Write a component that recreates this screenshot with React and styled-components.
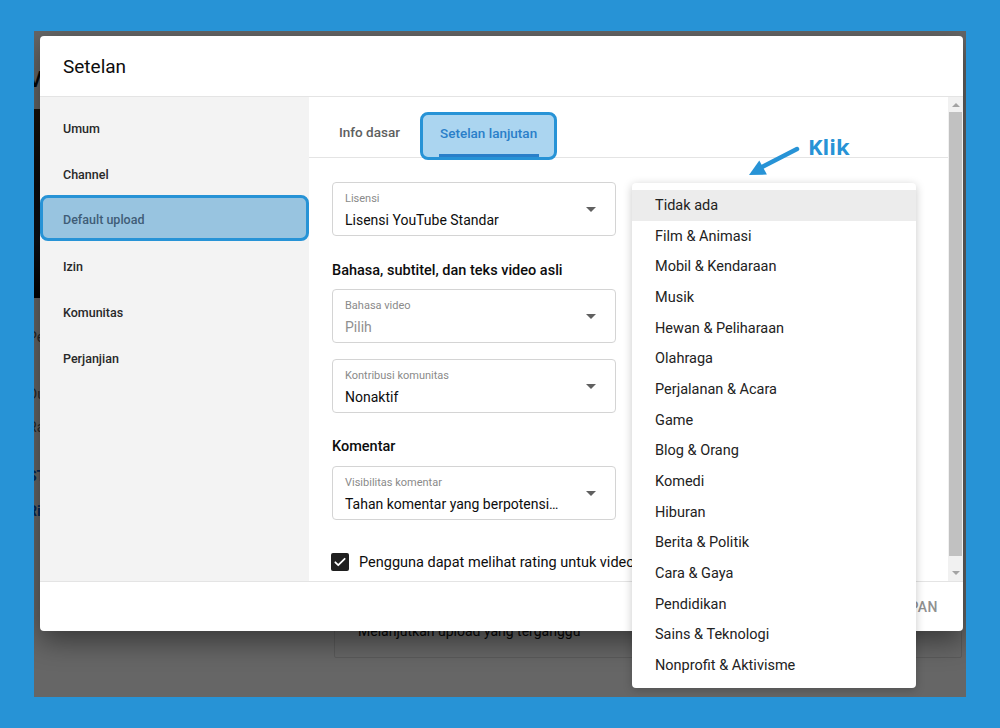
import React from "react";
import styled, { createGlobalStyle } from "styled-components";

const GlobalStyle = createGlobalStyle`
  html, body {
    margin: 0;
    padding: 0;
  }
  body {
    width: 1000px;
    height: 728px;
    overflow: hidden;
    background: #2793d6;
    font-family: Roboto, "Noto Sans", Arial, sans-serif;
  }
`;

const Frame = styled.div`
  position: relative;
  margin: 31px 0 0 34px;
  width: 932px;
  height: 666px;
  overflow: hidden;
  background: #ffffff;
`;

/* page that sits behind the dim overlay */
const BgPage = styled.div`
  display: grid;
  grid-template-columns: 300px 1fr;
  height: 100%;
`;

const BgLeft = styled.div`
  display: flex;
  flex-direction: column;
  margin-left: -6px;
  padding-top: 36px;
`;

const BgTitle = styled.div`
  font-size: 22px;
  font-weight: 500;
  color: #0f0f0f;
  height: 30px;
`;

const BgThumb = styled.div`
  margin-top: 12px;
  height: 189px;
  background: linear-gradient(180deg, #3a2a18 0%, #1b1b22 40%, #20283a 70%, #050505 100%);
`;

const BgLine = styled.div`
  margin-top: ${(p) => p.$gap}px;
  font-size: 14px;
  font-weight: ${(p) => (p.$link ? 700 : 400)};
  color: ${(p) => (p.$link ? "#065fd4" : "#606060")};
  line-height: 18px;
`;

const BgRight = styled.div`
  display: flex;
  flex-direction: column;
  justify-content: flex-end;
  padding-bottom: 39px;
`;

const BgCard = styled.div`
  height: 90px;
  margin-right: 4px;
  border: 1px solid #e0e0e0;
  border-radius: 2px;
  display: flex;
  align-items: flex-end;
  padding: 0 0 18px 23px;
  box-sizing: border-box;
  font-size: 14px;
  color: #0f0f0f;
`;

const Overlay = styled.div`
  position: absolute;
  inset: 0;
  background: rgba(0, 0, 0, 0.6);
`;

const Modal = styled.div`
  position: absolute;
  left: 6px;
  top: 5px;
  width: 923px;
  height: 595px;
  background: #ffffff;
  border-radius: 4px;
  box-shadow: 0 10px 28px rgba(0, 0, 0, 0.45);
  display: flex;
  flex-direction: column;
  overflow: hidden;
`;

const Header = styled.div`
  height: 60px;
  flex-shrink: 0;
  display: flex;
  align-items: center;
  padding-left: 23px;
  font-size: 19px;
  color: #0d0d0d;
  border-bottom: 1px solid #e4e4e4;
`;

const Body = styled.div`
  flex: 1;
  display: flex;
  min-height: 0;
`;

const Sidebar = styled.div`
  width: 269px;
  flex-shrink: 0;
  background: #f3f3f3;
  padding-top: 8px;
  display: flex;
  flex-direction: column;
`;

const NavItem = styled.div`
  height: 46px;
  box-sizing: border-box;
  display: flex;
  align-items: center;
  padding-left: ${(p) => (p.$active ? 20 : 23)}px;
  font-size: 12.5px;
  font-weight: 500;
  color: ${(p) => (p.$active ? "#3f5d77" : "#282828")};
  background: ${(p) => (p.$active ? "#98c4e0" : "transparent")};
  border: ${(p) => (p.$active ? "3px solid #2793d6" : "none")};
  border-radius: 8px;
  margin-top: ${(p) => (p.$active ? -2 : 0)}px;
  margin-bottom: ${(p) => (p.$active ? 2 : 0)}px;
  padding-top: ${(p) => (p.$active ? 3 : 0)}px;
`;

const Main = styled.div`
  flex: 1;
  display: flex;
  min-width: 0;
`;

const Content = styled.div`
  flex: 1;
  overflow: hidden;
`;

const TabBar = styled.div`
  height: 61px;
  box-sizing: border-box;
  display: flex;
  align-items: flex-end;
  padding-left: 10px;
  border-bottom: 1px solid #e4e4e4;
`;

const Tab = styled.div`
  position: relative;
  height: ${(p) => (p.$active ? 48 : 45)}px;
  box-sizing: border-box;
  display: flex;
  align-items: center;
  padding: 0 ${(p) => (p.$active ? 17 : 20)}px 6px;
  margin-bottom: ${(p) => (p.$active ? -3 : 0)}px;
  font-size: 13.5px;
  font-weight: 500;
  color: ${(p) => (p.$active ? "#2a7fc9" : "#606060")};
  background: ${(p) => (p.$active ? "#abd5f0" : "transparent")};
  border: ${(p) => (p.$active ? "3px solid #2793d6" : "none")};
  border-radius: 8px;

  &::after {
    content: "";
    display: ${(p) => (p.$active ? "block" : "none")};
    position: absolute;
    left: 16px;
    right: 15px;
    bottom: 0;
    height: 3px;
    background: #2a7fc9;
  }
`;

const Form = styled.div`
  padding: 24px 0 0 23px;
  display: flex;
  flex-direction: column;
`;

const Field = styled.div`
  width: 284px;
  height: 54px;
  box-sizing: border-box;
  border: 1px solid #d4d4d4;
  border-radius: 4px;
  display: flex;
  align-items: center;
  padding: 0 19px 0 12px;
  margin-bottom: ${(p) => p.$gap || 0}px;
`;

const FieldText = styled.div`
  flex: 1;
  min-width: 0;
  display: flex;
  flex-direction: column;
  padding-top: 4px;
`;

const FieldLabel = styled.div`
  font-size: 11px;
  line-height: 14px;
  color: #8a8a8a;
  margin-bottom: 4px;
`;

const FieldValue = styled.div`
  font-size: 14px;
  line-height: 20px;
  color: ${(p) => (p.$muted ? "#909090" : "#0d0d0d")};
  white-space: nowrap;
`;

const Caret = styled.div`
  width: 0;
  height: 0;
  border-left: 5px solid transparent;
  border-right: 5px solid transparent;
  border-top: 5px solid #606060;
`;

const SectionTitle = styled.div`
  font-size: 14.5px;
  font-weight: 500;
  line-height: 20px;
  color: #0d0d0d;
  margin: ${(p) => p.$top}px 0 ${(p) => p.$bottom}px;
`;

const CheckRow = styled.div`
  display: flex;
  align-items: center;
  gap: 10px;
  margin-top: 33px;
  margin-left: -1px;
  font-size: 14.5px;
  color: #0d0d0d;
  white-space: nowrap;
`;

const CheckBox = styled.div`
  width: 18px;
  height: 18px;
  border-radius: 2px;
  background: #1f1f1f;
  display: flex;
  align-items: center;
  justify-content: center;
  flex-shrink: 0;
`;

const Scrollbar = styled.div`
  width: 15px;
  flex-shrink: 0;
  background: #f1f1f1;
  display: flex;
  flex-direction: column;
  align-items: center;
`;

const ScrollBtn = styled.div`
  height: ${(p) => p.$h}px;
  width: 100%;
  display: flex;
  align-items: center;
  justify-content: center;
`;

const ScrollTri = styled.div`
  width: 0;
  height: 0;
  border-left: 4px solid transparent;
  border-right: 4px solid transparent;
  ${(p) => (p.$down ? "border-top" : "border-bottom")}: 4px solid #a3a3a3;
`;

const Thumb = styled.div`
  flex: 1;
  width: 13px;
  background: #c1c1c1;
  margin-bottom: 8px;
`;

const Footer = styled.div`
  height: 49px;
  flex-shrink: 0;
  border-top: 1px solid #e4e4e4;
  display: flex;
  align-items: center;
  justify-content: flex-end;
  padding-right: 25px;
  font-size: 14px;
  font-weight: 500;
  letter-spacing: 0.5px;
  color: #909090;
`;

const Menu = styled.div`
  position: absolute;
  left: 598px;
  top: 152px;
  width: 284px;
  padding: 7px 0 7px;
  background: #ffffff;
  border-radius: 4px;
  box-shadow: 0 2px 10px rgba(0, 0, 0, 0.22);
`;

const MenuItem = styled.div`
  height: 30.7px;
  display: flex;
  align-items: center;
  padding-left: 23px;
  font-size: 14.5px;
  color: #222222;
  background: ${(p) => (p.$active ? "#ececec" : "transparent")};
`;

const Annotation = styled.div`
  position: absolute;
  left: 711px;
  top: 102px;
  display: flex;
  align-items: flex-start;
`;

const Klik = styled.div`
  margin-left: 7px;
  font-family: "Open Sans", "Noto Sans", sans-serif;
  font-size: 22px;
  font-weight: 700;
  line-height: 26px;
  color: #2793d6;
`;

const nav = ["Umum", "Channel", "Default upload", "Izin", "Komunitas", "Perjanjian"];

const categories = [
  "Tidak ada",
  "Film & Animasi",
  "Mobil & Kendaraan",
  "Musik",
  "Hewan & Peliharaan",
  "Olahraga",
  "Perjalanan & Acara",
  "Game",
  "Blog & Orang",
  "Komedi",
  "Hiburan",
  "Berita & Politik",
  "Cara & Gaya",
  "Pendidikan",
  "Sains & Teknologi",
  "Nonprofit & Aktivisme",
];

function Select({ label, value, muted, gap }) {
  return (
    <Field $gap={gap}>
      <FieldText>
        <FieldLabel>{label}</FieldLabel>
        <FieldValue $muted={muted}>{value}</FieldValue>
      </FieldText>
      <Caret />
    </Field>
  );
}

export default function App() {
  return (
    <>
      <GlobalStyle />
      <Frame>
        <BgPage>
          <BgLeft>
            <BgTitle>Video channel</BgTitle>
            <BgThumb />
            <BgLine $gap={30}>Penayangan</BgLine>
            <BgLine $gap={39}>Durasi tonton</BgLine>
            <BgLine $gap={15}>Rata-rata</BgLine>
            <BgLine $gap={31} $link>STATISTIK</BgLine>
            <BgLine $gap={17} $link>Ringkasan</BgLine>
          </BgLeft>
          <BgRight>
            <BgCard>Melanjutkan upload yang terganggu</BgCard>
          </BgRight>
        </BgPage>
        <Overlay />

        <Modal>
          <Header>Setelan</Header>
          <Body>
            <Sidebar>
              {nav.map((item) => (
                <NavItem key={item} $active={item === "Default upload"}>
                  {item}
                </NavItem>
              ))}
            </Sidebar>
            <Main>
              <Content>
                <TabBar>
                  <Tab>Info dasar</Tab>
                  <Tab $active>Setelan lanjutan</Tab>
                </TabBar>
                <Form>
                  <Select label="Lisensi" value="Lisensi YouTube Standar" />
                  <SectionTitle $top={25} $bottom={8}>
                    Bahasa, subtitel, dan teks video asli
                  </SectionTitle>
                  <Select label="Bahasa video" value="Pilih" muted gap={16} />
                  <Select label="Kontribusi komunitas" value="Nonaktif" />
                  <SectionTitle $top={24} $bottom={9}>
                    Komentar
                  </SectionTitle>
                  <Select label="Visibilitas komentar" value="Tahan komentar yang berpotensi…" />
                  <CheckRow>
                    <CheckBox>
                      <svg width="14" height="14" viewBox="0 0 24 24">
                        <path
                          d="M4 12.5l5 5L20 6.5"
                          fill="none"
                          stroke="#ffffff"
                          strokeWidth="3"
                          strokeLinecap="round"
                          strokeLinejoin="round"
                        />
                      </svg>
                    </CheckBox>
                    Pengguna dapat melihat rating untuk video ini
                  </CheckRow>
                </Form>
              </Content>
              <Scrollbar>
                <ScrollBtn $h={15}>
                  <ScrollTri />
                </ScrollBtn>
                <Thumb />
                <ScrollBtn $h={17}>
                  <ScrollTri $down />
                </ScrollBtn>
              </Scrollbar>
            </Main>
          </Body>
          <Footer>SIMPAN</Footer>
        </Modal>

        <Menu>
          {categories.map((c, i) => (
            <MenuItem key={c} $active={i === 0}>
              {c}
            </MenuItem>
          ))}
        </Menu>

        <Annotation>
          <svg width="56" height="36" viewBox="0 0 56 36" style={{ marginTop: 10 }}>
            <line x1="52" y1="6" x2="17" y2="24" stroke="#2793d6" strokeWidth="4.5" strokeLinecap="round" />
            <polygon points="4,32 21.9,31.6 14.3,17.4" fill="#2793d6" />
          </svg>
          <Klik>Klik</Klik>
        </Annotation>
      </Frame>
    </>
  );
}
